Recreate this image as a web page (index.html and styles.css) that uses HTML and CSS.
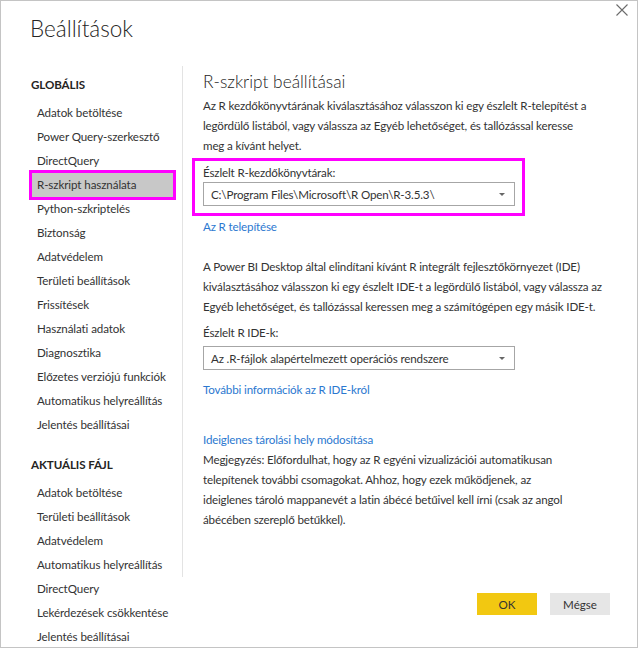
FILE: index.html
```html
<!DOCTYPE html>
<html lang="hu">
<head>
<meta charset="utf-8">
<title>Beállítások</title>
<link rel="stylesheet" href="styles.css">
</head>
<body>
<div class="dialog">
  <header class="titlebar">
    <h1 class="title">Beállítások</h1>
    <button class="close" aria-label="Bezárás">
      <svg width="12" height="12" viewBox="0 0 12 12"><path d="M0.5 0.5 L11.5 11.5 M11.5 0.5 L0.5 11.5" stroke="#6b6b6b" stroke-width="1.1" fill="none"/></svg>
    </button>
  </header>
  <div class="main">
    <nav class="sidebar">
      <div class="section-title">GLOBÁLIS</div>
      <ul class="nav-list">
        <li class="nav-item">Adatok betöltése</li>
        <li class="nav-item">Power Query-szerkesztő</li>
        <li class="nav-item">DirectQuery</li>
        <li class="nav-item selected">R-szkript használata</li>
        <li class="nav-item">Python-szkriptelés</li>
        <li class="nav-item">Biztonság</li>
        <li class="nav-item">Adatvédelem</li>
        <li class="nav-item">Területi beállítások</li>
        <li class="nav-item">Frissítések</li>
        <li class="nav-item">Használati adatok</li>
        <li class="nav-item">Diagnosztika</li>
        <li class="nav-item">Előzetes verziójú funkciók</li>
        <li class="nav-item">Automatikus helyreállítás</li>
        <li class="nav-item">Jelentés beállításai</li>
      </ul>
      <div class="section-title section-second">AKTUÁLIS FÁJL</div>
      <ul class="nav-list">
        <li class="nav-item">Adatok betöltése</li>
        <li class="nav-item">Területi beállítások</li>
        <li class="nav-item">Adatvédelem</li>
        <li class="nav-item">Automatikus helyreállítás</li>
        <li class="nav-item">DirectQuery</li>
        <li class="nav-item">Lekérdezések csökkentése</li>
        <li class="nav-item">Jelentés beállításai</li>
      </ul>
    </nav>
    <div class="right">
      <section class="content">
        <h2 class="heading">R-szkript beállításai</h2>
        <p class="para">Az R kezdőkönyvtárának kiválasztásához válasszon ki egy észlelt R-telepítést a<br>legördülő listából, vagy válassza az Egyéb lehetőséget, és tallózással keresse<br>meg a kívánt helyet.</p>
        <div class="highlight">
          <div class="label">Észlelt R-kezdőkönyvtárak:</div>
          <div class="select">
            <span>C:\Program Files\Microsoft\R Open\R-3.5.3\</span>
            <span class="arrow"></span>
          </div>
        </div>
        <a class="link link-install" href="#">Az R telepítése</a>
        <p class="para para-ide">A Power BI Desktop által elindítani kívánt R integrált fejlesztőkörnyezet (IDE)<br>kiválasztásához válasszon ki egy észlelt IDE-t a legördülő listából, vagy válassza az<br>Egyéb lehetőséget, és tallózással keressen meg a számítógépen egy másik IDE-t.</p>
        <div class="label label-ide">Észlelt R IDE-k:</div>
        <div class="select">
          <span>Az .R-fájlok alapértelmezett operációs rendszere</span>
          <span class="arrow"></span>
        </div>
        <a class="link link-more" href="#">További információk az R IDE-król</a>
        <a class="link link-temp" href="#">Ideiglenes tárolási hely módosítása</a>
        <p class="para">Megjegyzés: Előfordulhat, hogy az R egyéni vizualizációi automatikusan<br>telepítenek további csomagokat. Ahhoz, hogy ezek működjenek, az<br>ideiglenes tároló mappanevét a latin ábécé betűivel kell írni (csak az angol<br>ábécében szereplő betűkkel).</p>
      </section>
      <footer class="footer">
        <button class="btn btn-ok">OK</button>
        <button class="btn btn-cancel">Mégse</button>
      </footer>
    </div>
  </div>
</div>
</body>
</html>
```

FILE: styles.css
```css
* { box-sizing: border-box; }
html, body { margin: 0; padding: 0; background: #fff; }
body {
  font-family: "Segoe UI", "Lato", "Noto Sans", sans-serif;
  color: #333333;
  font-size: 11.6px;
  letter-spacing: -0.15px;
}
.dialog {
  width: 638px;
  height: 648px;
  border: 1px solid #c4c4c4;
  overflow: hidden;
  display: flex;
  flex-direction: column;
  background: #fff;
}
.titlebar {
  height: 65px;
  flex: none;
  display: flex;
  justify-content: space-between;
  align-items: flex-start;
  padding-left: 29px;
}
.title {
  margin: 0;
  padding-top: 12px;
  font-size: 22.5px;
  line-height: 32px;
  font-weight: 300;
  letter-spacing: 0;
  color: #252423;
}
.close {
  border: 0;
  background: transparent;
  padding: 0;
  margin: 3px 9px 0 0;
  width: 12px;
  height: 12px;
  display: flex;
}
.main {
  flex: 1;
  display: flex;
  min-height: 0;
}
.sidebar {
  width: 181px;
  flex: none;
  padding-left: 29px;
  padding-top: 7px;
  letter-spacing: -0.1px;
}
.section-title {
  font-weight: 700;
  font-size: 11.6px;
  line-height: 24px;
  color: #252423;
  padding-left: 1px;
}
.section-second { margin-top: 16px; }
.nav-list {
  list-style: none;
  margin: 4px 0 0 2px;
  padding: 0;
}
.nav-item {
  width: 141px;
  height: 24px;
  line-height: 24px;
  padding-left: 5px;
  white-space: nowrap;
  color: #333;
}
.nav-item.selected {
  background: #c8c8c8;
  outline: 3px solid #ff00ff;
}
.right {
  flex: 1;
  display: flex;
  flex-direction: column;
}
.content {
  height: 511px;
  border-left: 1px solid #e3e3e3;
  padding: 4px 0 0 20px;
  display: flex;
  flex-direction: column;
  align-items: flex-start;
}
.heading {
  margin: 0;
  font-size: 17.3px;
  line-height: 24px;
  font-weight: 300;
  letter-spacing: 0;
  color: #252423;
}
.para {
  margin: 2px 0 0 0;
  line-height: 20px;
  white-space: nowrap;
}
.highlight {
  margin: 2px 0 0 -11px;
  border: 3px solid #ff00ff;
  padding: 3px 7px 7px 8px;
}
.label {
  line-height: 18px;
}
.select {
  width: 312px;
  height: 24px;
  border: 1px solid #a6a6a6;
  display: flex;
  align-items: center;
  justify-content: space-between;
  padding: 0 9px 0 7px;
  color: #333;
}
.arrow {
  width: 0;
  height: 0;
  border-left: 3px solid transparent;
  border-right: 3px solid transparent;
  border-top: 3px solid #666;
}
.link {
  color: #2b78d0;
  text-decoration: none;
  line-height: 20px;
}
.link-install { margin-top: 1px; }
.para-ide { margin-top: 20px; }
.label-ide { margin-top: 7px; margin-bottom: 4px; }
.link-more { margin-top: 10px; }
.link-temp { margin-top: 30px; }
.link-temp + .para { margin-top: 0; }
.footer {
  display: flex;
  justify-content: flex-end;
  gap: 13px;
  padding: 16px 27px 0 0;
}
.btn {
  width: 60px;
  height: 22px;
  border: 0;
  font-family: inherit;
  font-size: 11.6px;
  color: #333;
  padding: 0;
}
.btn-ok { background: #f2c811; }
.btn-cancel { background: #e6e6e6; }
```
